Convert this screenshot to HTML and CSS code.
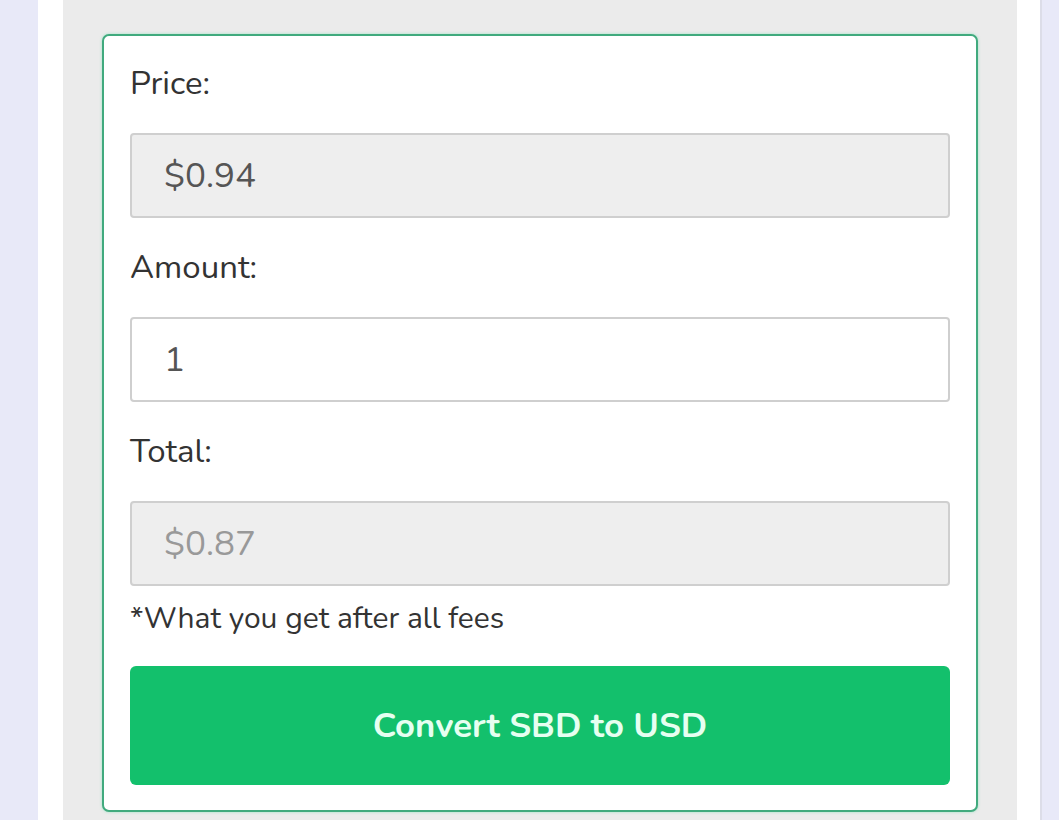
FILE: index.html
```html
<!DOCTYPE html>
<html>
<head>
<meta charset="utf-8">
<link rel="stylesheet" href="styles.css">
</head>
<body>
<div class="page">
  <div class="panel">
    <div class="card">
      <label class="label">Price:</label>
      <div class="field readonly">$0.94</div>
      <label class="label">Amount:</label>
      <div class="field">1</div>
      <label class="label">Total:</label>
      <div class="field readonly muted">$0.87</div>
      <p class="note">*What you get after all fees</p>
      <button class="btn">Convert SBD to USD</button>
    </div>
  </div>
</div>
</body>
</html>
```
FILE: styles.css
```css
html, body {
  margin: 0;
  padding: 0;
  background: #e8e9f8;
  height: 820px;
  overflow: hidden;
}
body {
  font-family: "Nunito", "Lato", "Open Sans", sans-serif;
  color: #333;
}
.page {
  margin-left: 38px;
  width: 1004px;
  height: 820px;
  background: #fff;
  padding: 0 23px 0 25px;
  box-sizing: border-box;
  border-right: 2px solid #dcdde8;
}
.panel {
  background: #ebebeb;
  height: 100%;
  padding: 34px 39px 0 39px;
  box-sizing: border-box;
}
.card {
  background: #fff;
  border: 2px solid #41aa7e;
  border-radius: 7px;
  box-shadow: 0 0 3px rgba(80, 220, 160, 0.5);
  padding: 28px 26px 25px 26px;
  display: flex;
  flex-direction: column;
}
.label {
  font-size: 33px;
  line-height: 40px;
  color: #333;
  margin-bottom: 29px;
}
.field {
  height: 85px;
  box-sizing: border-box;
  border: 2px solid #cfcfcf;
  border-radius: 4px;
  background: #fff;
  font-size: 35px;
  color: #555;
  display: flex;
  align-items: center;
  padding-left: 32px;
  margin-bottom: 30px;
}
.field.readonly {
  background: #eeeeee;
}
.field.muted {
  color: #999;
  margin-bottom: 15px;
}
.note {
  margin: 0 0 29px 0;
  font-size: 30px;
  line-height: 36px;
  color: #333;
}
.btn {
  height: 119px;
  border: none;
  border-radius: 6px;
  background: #13c06c;
  color: #e6fff1;
  font-family: "Nunito", "Lato", sans-serif;
  font-size: 34.7px;
  font-weight: 700;
  cursor: pointer;
}
```
